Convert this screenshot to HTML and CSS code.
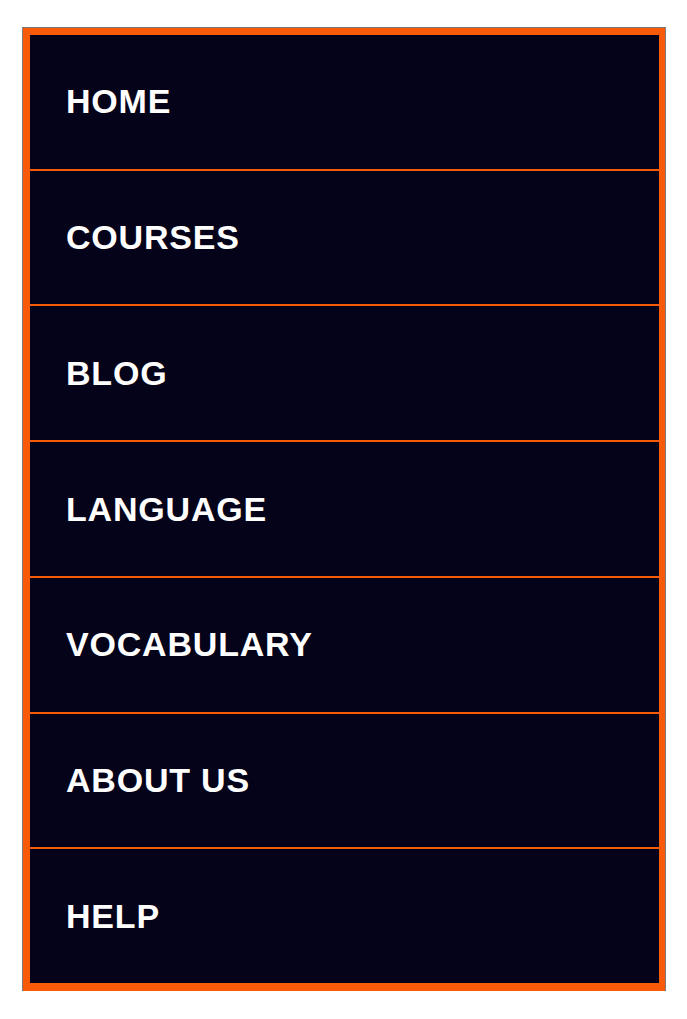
FILE: index.html
```html
<!DOCTYPE html>
<html lang="en">
<head>
<meta charset="utf-8">
<title>Menu</title>
<link rel="stylesheet" href="styles.css">
</head>
<body>
<nav class="menu">
  <a class="menu-item" href="#">HOME</a>
  <a class="menu-item" href="#">COURSES</a>
  <a class="menu-item" href="#">BLOG</a>
  <a class="menu-item" href="#">LANGUAGE</a>
  <a class="menu-item" href="#">VOCABULARY</a>
  <a class="menu-item" href="#">ABOUT US</a>
  <a class="menu-item" href="#">HELP</a>
</nav>
</body>
</html>
```
FILE: styles.css
```css
html, body {
  margin: 0;
  padding: 0;
  background: #ffffff;
}
body {
  padding: 28px 0 0 23px;
}
.menu {
  box-sizing: border-box;
  width: 642px;
  height: 963px;
  background: #05031a;
  border: 7px solid #f85a07;
  border-right-width: 6px;
  border-bottom-width: 8px;
  outline: 1px solid #7a7a7a;
  display: flex;
  flex-direction: column;
}
.menu-item {
  flex: 1 1 0;
  display: flex;
  align-items: center;
  padding-left: 36px;
  color: #ffffff;
  text-decoration: none;
  font-family: "Liberation Sans", Arial, sans-serif;
  font-weight: bold;
  font-size: 34px;
  letter-spacing: 0.8px;
  border-bottom: 2px solid #f85a07;
}
.menu-item:last-child {
  border-bottom: none;
}
```
